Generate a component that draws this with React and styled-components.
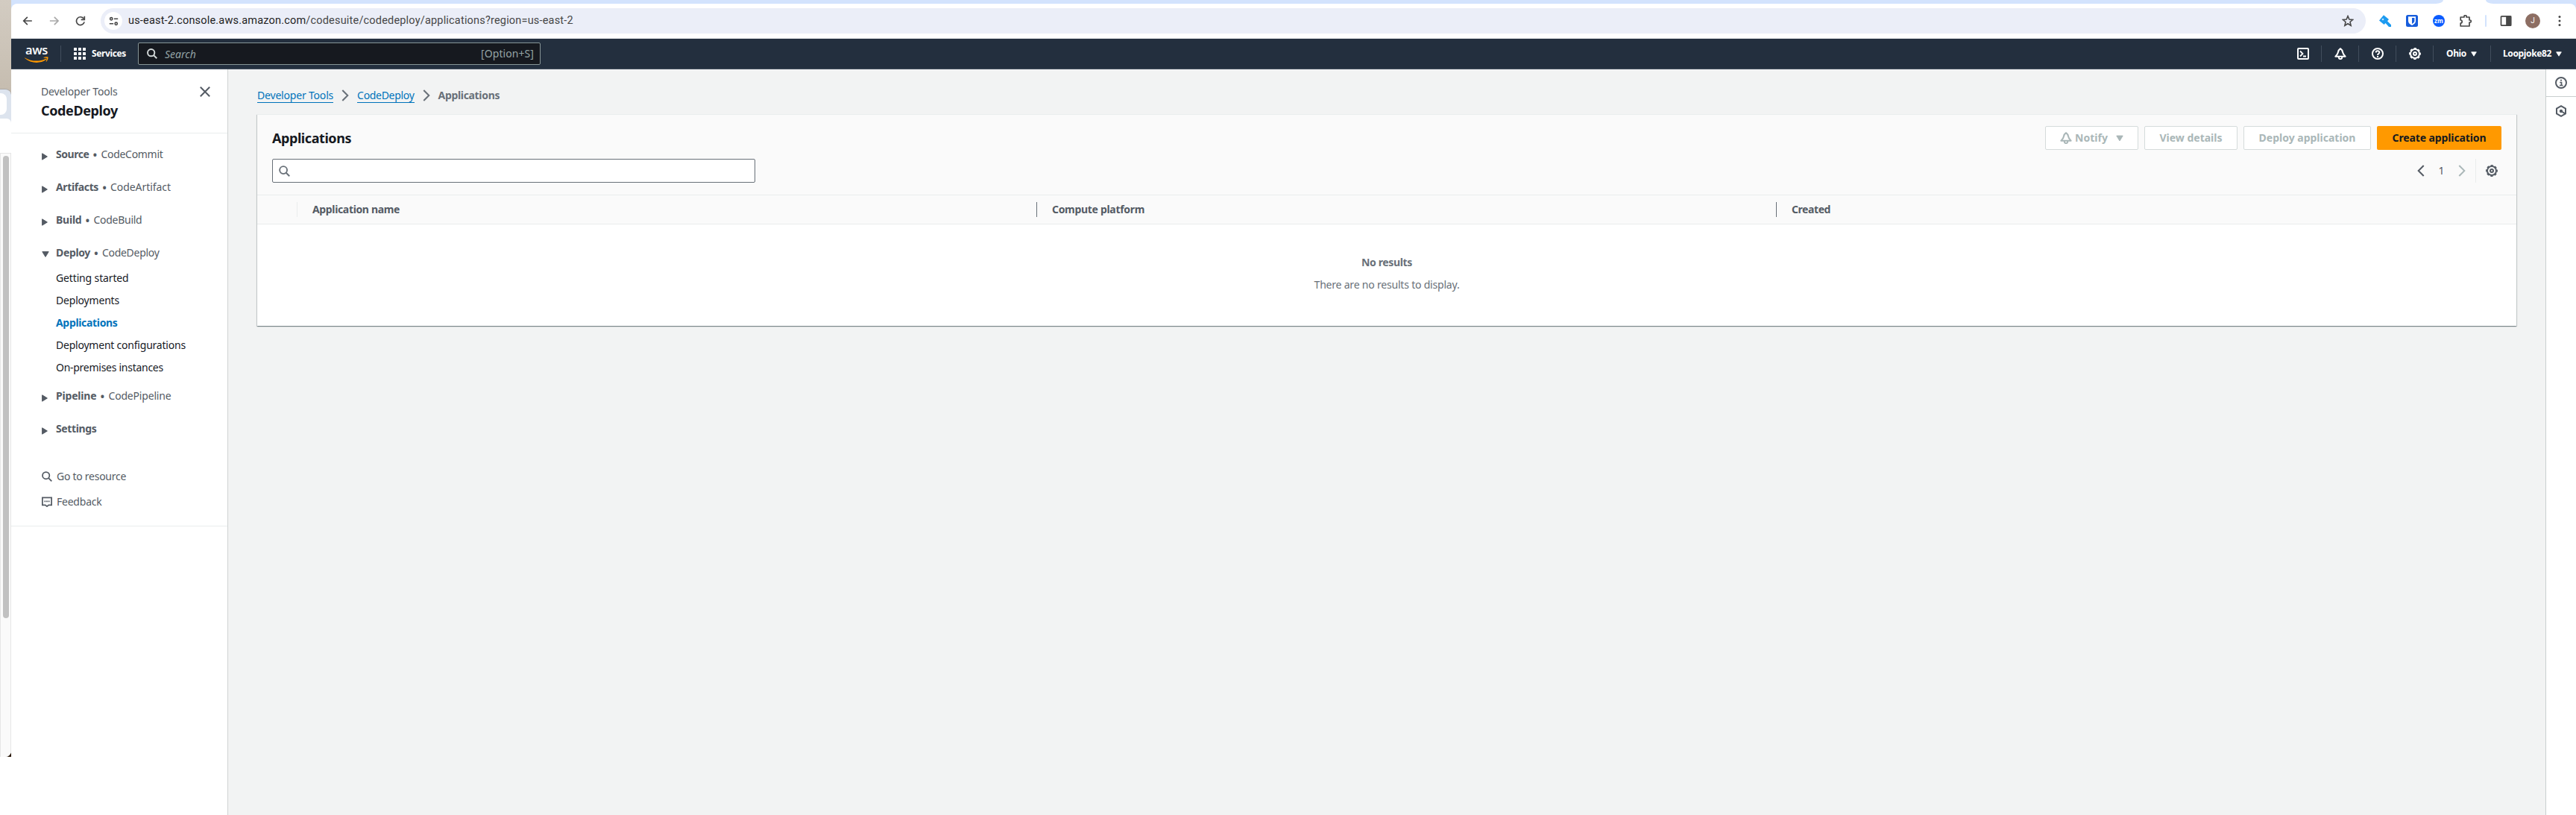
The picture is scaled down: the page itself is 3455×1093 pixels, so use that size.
import React from "react";
import styled, { createGlobalStyle, css } from "styled-components";

const Global = createGlobalStyle`
  * { box-sizing: border-box; }
  body { margin: 0; background: #fff; font-family: "Noto Sans", "Open Sans", sans-serif; font-size: 14px; line-height: 20px; color: #16191f; overflow: hidden; }
`;

const T = styled.span`
  white-space: nowrap;
  display: inline-block;
  letter-spacing: ${(p) => p.$ls || 0}px;
`;

/* ---------- page frame ---------- */
const Screen = styled.div`display: flex; width: 3455px; height: 1093px; overflow: hidden;`;
const Browser = styled.div`flex: 1; display: flex; flex-direction: column; min-width: 0; background: #d3e3fd;`;

/* ---------- window behind, on the left ---------- */
const Behind = styled.div`width: 15px; display: flex; flex-direction: column; overflow: hidden; background: #fff;`;
const Wallpaper = styled.div`height: 1015px; display: flex; flex-direction: column; padding-top: 119px; background: linear-gradient(#d3ccc2 0, #c6bdb0 119px, #2b1a0a 300px);`;
const BackWindow = styled.div`flex: 1; display: flex; flex-direction: column; background: #dde4ee; border-radius: 0 8px 8px 0; overflow: hidden; border-top: 1px solid #aaa8a5;`;
const BackTab = styled.div`width: 9px; height: 29px; margin-top: 5px; background: #fff; border-radius: 0 8px 8px 0;`;
const BackBar = styled.div`height: 46px; margin-top: 5px; background: #fff; border-radius: 0 6px 0 0;`;
const Track = styled.div`flex: 1; background: #fafafa; border: solid #e6e6e6; border-width: 1px 1px 0 1px; padding: 3px 2px 0 3px;`;
const Thumb = styled.div`width: 8px; height: 620px; border-radius: 4px; background: #c1c1c1;`;

/* ---------- browser toolbar ---------- */
const TabStrip = styled.div`height: 5px; display: flex; justify-content: space-between; background: #fff;`;
const TabsBefore = styled.div`width: 3262px; height: 5px; background: #d3e3fd; border-radius: 0 0 10px 0 / 0 0 5px 0;`;
const TabsAfter = styled.div`width: 121px; height: 5px; background: #d3e3fd; border-radius: 0 0 0 10px / 0 0 0 5px;`;
const ToolBar = styled.div`height: 47px; display: flex; align-items: center; background: #fff; border-radius: 8px 8px 0 0; border-bottom: 1px solid #dfe1e5; color: #474747;`;
const Tools = styled.div`display: flex; align-items: center; gap: 22px; padding: 0 20px 0 15px; width: 120px;`;
const Address = styled.div`flex: 1; height: 34px; border-radius: 17px; background: #ebeef8; display: flex; align-items: center; padding: 0 16px 0 5px;`;
const SiteInfo = styled.div`width: 24px; height: 24px; border-radius: 50%; background: #fff; display: flex; align-items: center; justify-content: center; margin-right: 8px;`;
const Url = styled.div`flex: 1; font: 14.5px/20px Roboto, sans-serif; color: #474747; white-space: nowrap;`;
const Host = styled.b`font-weight: 400; color: #1f1f1f;`;
const Extensions = styled.div`width: 282px; display: flex; align-items: center; padding-left: 18px; gap: 20px;`;
const Zoom = styled.div`width: 16px; height: 16px; border-radius: 50%; background: #0b5cff; color: #fff; font: 700 8px/15px "Open Sans", sans-serif; text-align: center;`;
const ThinRule = styled.div`width: 2px; height: 16px; margin: 0 -2px 0 -2px; border-radius: 1px; background: #d3e3fd;`;
const Avatar = styled.div`width: 20px; height: 20px; margin: 0 -2px; border-radius: 50%; background: #8d6e63; color: #fff; font: 10px/20px Roboto, sans-serif; text-align: center;`;

/* ---------- console navigation ---------- */
const Nav = styled.div`height: 41px; display: flex; align-items: center; background: #232f3e; border-bottom: 1px solid #414d5c; color: #fff; font-size: 12px; font-weight: 700;`;
const Logo = styled.div`width: 66px; padding-left: 18px; display: flex; flex-direction: column; align-items: flex-start; line-height: 0;`;
const LogoText = styled.div`font: 600 16.5px/14px "Open Sans", sans-serif; height: 16px; padding-left: 1px;`;
const Rule = styled.div`width: 1px; height: 22px; background: #414d5c;`;
const Services = styled.div`width: 103px; padding-left: 17px; display: flex; align-items: center; gap: 8px;`;
const NavSearch = styled.div`width: 540px; height: 30px; display: flex; align-items: center; background: #16191f; border: 1px solid #879596; border-radius: 2px; padding: 0 8px 0 11px; color: #95a5a6; font-size: 14px; font-weight: 400;`;
const Placeholder = styled.div`flex: 1; padding: 1px 0 0 10px; font-style: italic;`;
const Spacer = styled.div`flex: 1;`;
const NavCell = styled.div`width: ${(p) => p.$w || 49}px; display: flex; align-items: center; gap: 6px; ${(p) => p.$pad ? css`padding-left: ${p.$pad}px;` : css`justify-content: center;`}`;

/* ---------- console body ---------- */
const Body = styled.div`flex: 1; display: flex; min-height: 0; background: #f2f3f3;`;
const Side = styled.div`width: 291px; background: #fff; border-right: 1px solid #d0d4d4; color: #545b64;`;
const SideHead = styled.div`height: 86px; display: flex; justify-content: space-between; padding: 20px 22px 0 40px; border-bottom: 1px solid #eaeded;`;
const SideTitle = styled.div`margin-top: 4px; font-size: 18px; line-height: 22px; font-weight: 700; color: #16191f;`;
const CloseBox = styled.div`padding-top: 2px; height: 18px; line-height: 0;`;
const SideNav = styled.div`height: 527px; padding: 18px 0 0 40px; border-bottom: 1px solid #eaeded;`;
const Section = styled.div`display: flex; height: 20px; margin-bottom: ${(p) => p.$gap ?? 24}px;`;
const Twist = styled.div`width: 20px; padding: 8px 0 0 1px; line-height: 0;`;
const Bold = styled(T)`font-weight: 700;`;
const Dot = styled.span`width: 16px; text-align: center; flex: none; font-size: 18px;`;
const Links = styled.div`display: flex; flex-direction: column; gap: 10px; padding-left: 20px; margin-bottom: 18px;`;
const SideLink = styled.div`height: 20px; color: ${(p) => (p.$on ? "#0073bb" : "#16191f")}; font-weight: ${(p) => (p.$on ? 700 : 400)};`;
const Utility = styled.div`display: flex; align-items: center; height: 20px; gap: 6px; margin-bottom: 14px; padding-left: 1px;`;

const Main = styled.div`flex: 1; padding: 25px 39px 0 39px;`;
const Crumbs = styled.div`display: flex; align-items: center; height: 20px; color: #687078; font-weight: 700;`;
const Crumb = styled.a`color: #0073bb; font-weight: 400; height: 20px; box-shadow: inset 0 -1px #0073bb;`;
const CrumbArrow = styled.div`width: 32px; display: flex; justify-content: center;`;
const Card = styled.div`margin-top: 15px; background: #fff; border-top: 1px solid #eaeded; box-shadow: 0 1px 1px 0 rgba(0,28,36,.3), 1px 1px 1px 0 rgba(0,28,36,.15), -1px 1px 1px 0 rgba(0,28,36,.15);`;
const CardHead = styled.div`height: 108px; padding: 15px 20px 0; background: #fafafa; border-bottom: 1px solid #eaeded; display: flex; flex-direction: column; gap: 12px;`;
const Line = styled.div`height: 32px; display: flex; align-items: center; justify-content: space-between;`;
const Title = styled.div`font-size: 18px; line-height: 22px; font-weight: 700;`;
const Buttons = styled.div`display: flex; gap: 8px;`;
const Button = styled.div`width: ${(p) => p.$w}px; height: 32px; display: flex; align-items: center; justify-content: center; border-radius: 2px; font-weight: 700;
  ${(p) => p.$primary ? css`background: #ff9900; color: #16191f;` : css`background: #fff; color: #aab7b8; border: 1px solid #d5dbdb;`}`;
const BellGap = styled.div`margin-right: 4px; line-height: 0;`;
const CaretGap = styled.div`margin-left: 11px; line-height: 0;`;
const Filter = styled.div`width: 648px; height: 32px; padding-left: 8px; display: flex; align-items: center; background: #fff; border: 1px solid #687078; border-radius: 2px;`;
const Pager = styled.div`display: flex; align-items: center; color: #545b64; height: 32px; padding-right: 5px;`;
const PageNo = styled.div`width: 45px; text-align: center;`;
const PagerRule = styled.div`width: 1px; height: 32px; margin: 0 13px; background: #eaeded;`;
const HeadRow = styled.div`height: 39px; display: grid; grid-template-columns: 54px 1fr 1fr 1fr; align-items: center; background: #fafafa; border-bottom: 1px solid #eaeded; color: #545b64; font-weight: 700;`;
const HeadCell = styled.div`height: 20px; padding-left: 20px; display: flex; align-items: center; border-right: ${(p) => (p.$rule ? `1px solid ${p.$rule}` : "0")};`;
const Empty = styled.div`height: 136px; padding-top: 41px; display: flex; flex-direction: column; align-items: center; gap: 10px; color: #687078;`;

const Rail = styled.div`width: 41px; background: #fff; border-left: 1px solid #c9cfcf; color: #545b64;`;
const RailCell = styled.div`height: 37px; display: flex; align-items: center; justify-content: center; border-bottom: ${(p) => (p.$rule ? "1px solid #c9cfcf" : "0")};`;

/* ---------- icons ---------- */
const Svg = ({ s = 16, c = "currentColor", w = 2, children }) => (
  <svg width={s} height={s} viewBox="0 0 16 16" fill="none" stroke={c} strokeWidth={w}>{children}</svg>
);
const Search = (p) => <Svg {...p}><circle cx="6.5" cy="6.5" r="5.3" /><path d="M10.4 10.4 15.2 15.2" /></Svg>;
const Gear = (p) => (
  <Svg {...p}>
    <circle cx="8" cy="8" r="6" />
    <circle cx="8" cy="8" r="7.2" strokeWidth="1.5" strokeDasharray="3.2 2.455" strokeDashoffset="1.6" />
    <circle cx="8" cy="8" r="2" />
  </Svg>
);
const Bell = (p) => (
  <Svg {...p}>
    <path strokeLinejoin="round" d="M8 1.2C6.2 2.4 5.3 4 4.900 6 4.500 8.300 3.400 9.900 1.400 11.800H14.600C12.600 9.900 11.500 8.300 11.100 6 10.700 4 9.800 2.400 8 1.200Z" />
    <path d="M5.8 12v.9a2.2 2.2 0 0 0 4.400 0V12" />
  </Svg>
);
const Down = ({ c = "currentColor", w = 10, h = 8 }) => (
  <svg width={w} height={h} viewBox="0 0 10 8"><path d="M.8.6H9.2L5 7.4Z" fill={c} stroke={c} strokeLinejoin="round" /></svg>
);
const Right = () => (
  <svg width="8" height="10" viewBox="0 0 8 10"><path d="M.6.8V9.2L7.4 5Z" fill="#545b64" stroke="#545b64" strokeLinejoin="round" /></svg>
);
const Chevron = ({ c, left }) => (
  <svg width="10" height="16" viewBox="0 0 10 16" fill="none" stroke={c} strokeWidth="2"><path d={left ? "M8.7 1 1.7 8l7 7" : "M1.3 1l7 7-7 7"} /></svg>
);

const sections = [
  ["Source", "CodeCommit", -0.44, -0.3],
  ["Artifacts", "CodeArtifact", -0.37, -0.06],
  ["Build", "CodeBuild", -0.23, -0.27],
  ["Deploy", "CodeDeploy", -0.35, -0.3],
  ["Pipeline", "CodePipeline", -0.18, -0.18],
  ["Settings", null, -0.36],
];
const links = [
  ["Getting started", -0.14],
  ["Deployments", -0.19],
  ["Applications", -0.33],
  ["Deployment configurations", -0.22],
  ["On-premises instances", -0.27],
];

const SectionRow = ({ item, open, gap }) => (
  <Section $gap={gap}>
    <Twist>{open ? <Down c="#545b64" /> : <Right />}</Twist>
    <Bold $ls={item[2]}>{item[0]}</Bold>
    {item[1] && <Dot>•</Dot>}
    {item[1] && <T $ls={item[3]}>{item[1]}</T>}
  </Section>
);

export default function App() {
  return (
    <Screen>
      <Global />
      <Behind>
        <Wallpaper>
          <BackWindow><BackTab /><BackBar /><Track><Thumb /></Track></BackWindow>
        </Wallpaper>
      </Behind>
      <Browser>
        <TabStrip><TabsBefore /><TabsAfter /></TabStrip>
        <ToolBar>
          <Tools>
            <Svg s={14} w={2}><path d="M15 8H2.5M8 2 2 8 8 14" /></Svg>
            <Svg s={14} w={2} c="#a9a9a9"><path d="M1 8H13.5M8 2 14 8 8 14" /></Svg>
            <Svg s={14} w={2}><path d="M13.4 4.8A6.300 6.300 0 1 0 14.200 9.600" /><path d="M14.400 .8v5.400H9" /></Svg>
          </Tools>
          <Address>
            <SiteInfo><Svg s={13} w={1.9}><circle cx="4" cy="4" r="2" /><path d="M8.5 4H15M1 12H7.5" /><circle cx="12" cy="12" r="2" /></Svg></SiteInfo>
            <Url>
              <T $ls={0.19}><Host>us-east-2.console.aws.amazon.com</Host>/codesuite/codedeploy/applications?region=us-east-2</T>
            </Url>
            <Svg w={1.6}><path d="M8 1.6 9.9 6l4.7.4-3.6 3.1 1.1 4.7L8 11.7l-4.1 2.5L5 9.5 1.4 6.4 6.1 6Z" /></Svg>
          </Address>
          <Extensions>
            <Svg><path d="M6 .3 13 6l-2 2.3 5 5V16h-3l-4.5-5-2 2L0 7.5Z" fill="#1d9bf0" stroke="none" /><circle cx="5" cy="6" r="1.3" fill="#bfe3fb" stroke="none" /></Svg>
            <Svg><rect width="16" height="16" rx="2.5" fill="#175ddc" stroke="none" /><path d="M3 2.3H13V8c0 3-2.6 4.8-5 6C5.6 12.8 3 11 3 8Z" fill="#fff" stroke="none" /><path d="M8 4h3.4v4c0 1.8-1.7 3-3.4 4Z" fill="#175ddc" stroke="none" /></Svg>
            <Zoom>zm</Zoom>
            <Svg w={1.7}><path strokeLinejoin="round" d="M1.200 3H6V2a1.500 1.500 0 0 1 3 0v1H13V7h.8a1.500 1.500 0 0 1 0 3H13v5H1.200V11a2 2 0 0 0 0-4Z" /></Svg>
            <ThinRule />
            <Svg w={1.7}><rect x="1.5" y="1.8" width="13" height="12.4" rx="1" /><path d="M9 2h5.5v12H9Z" fill="#474747" /></Svg>
            <Avatar>J</Avatar>
            <Svg><g fill="#474747" stroke="none"><circle cx="8" cy="2.6" r="1.5" /><circle cx="8" cy="8" r="1.5" /><circle cx="8" cy="13.4" r="1.5" /></g></Svg>
          </Extensions>
        </ToolBar>
        <Nav>
          <Logo>
            <LogoText><T $ls={-0.35}>aws</T></LogoText>
            <svg width="32" height="9" viewBox="0 0 32 9" fill="#ff9900"><path d="M.3 1.4C9 6.6 20 6.7 28 2.9c1-.4 1.7.5.8 1.2C21 9.8 8 9.2.2 2c-.3-.4-.2-.8.1-.6Z" /><path d="M25.5 1.3C27.5 0 31 .1 31.4.6c.5.7-.2 4.5-2.3 6.1-.4.3-.7.1-.5-.3.5-1.2 1.5-3.8 1-4.4-.5-.6-2.6-.3-3.8-.2-.4 0-.5-.3-.3-.5Z" /></svg>
          </Logo>
          <Rule />
          <Services>
            <svg width="16" height="16" fill="#fff">{[0, 6, 12].map((y) => [0, 6, 12].map((x) => <rect key={x + "-" + y} x={x} y={y} width="4" height="4" rx=".5" />))}</svg>
            <T $ls={-0.37}>Services</T>
          </Services>
          <NavSearch>
            <Search s={14} c="#d5dbdb" w={2.2} />
            <Placeholder><T>Search</T></Placeholder>
            <T $ls={0.07}>[Option+S]</T>
          </NavSearch>
          <Spacer />
          <NavCell><Svg><rect x="1" y="1" width="14" height="14" rx="1" /><path d="M4 4.5 7.5 8 4 11.5M8 11.5h4" strokeWidth="1.8" /></Svg></NavCell>
          <Rule />
          <NavCell><Bell /></NavCell>
          <Rule />
          <NavCell><Svg><circle cx="8" cy="8" r="7" /><path d="M5.7 6.5C5.7 3.6 10.3 3.6 10.3 6.3 10.3 8 8 8 8 10" /><path d="M8 11v2" /></Svg></NavCell>
          <Rule />
          <NavCell><Gear /></NavCell>
          <Rule />
          <NavCell $w={76} $pad={17}><T $ls={-0.35}>Ohio</T><Down w={8} h={7} /></NavCell>
          <Rule />
          <NavCell $w={114} $pad={16}><T $ls={-0.37}>Loopjoke82</T><Down w={8} h={7} /></NavCell>
        </Nav>
        <Body>
          <Side>
            <SideHead>
              <div>
                <T $ls={-0.16}>Developer Tools</T>
                <SideTitle><T $ls={-0.38}>CodeDeploy</T></SideTitle>
              </div>
              <CloseBox><Svg><path d="M1.8 1.8l12.4 12.4M14.2 1.8l-12.4 12.4" /></Svg></CloseBox>
            </SideHead>
            <SideNav>
              {sections.slice(0, 3).map((s) => <SectionRow key={s[0]} item={s} />)}
              <SectionRow item={sections[3]} open gap={14} />
              <Links>{links.map((l) => <SideLink key={l[0]} $on={l[0] === "Applications"}><T $ls={l[1]}>{l[0]}</T></SideLink>)}</Links>
              <SectionRow item={sections[4]} />
              <SectionRow item={sections[5]} gap={44} />
              <Utility><Search s={14} /><T $ls={-0.27}>Go to resource</T></Utility>
              <Utility><Svg s={14} w={2}><path d="M1 1.5H15V13H10.5L8 15 5.5 13H1Z" /><path d="M4 7.3h8" strokeDasharray="2 1" /></Svg><T $ls={-0.23}>Feedback</T></Utility>
            </SideNav>
          </Side>
          <Main>
            <Crumbs>
              <Crumb><T $ls={-0.19}>Developer Tools</T></Crumb>
              <CrumbArrow><Chevron c="#687078" /></CrumbArrow>
              <Crumb><T $ls={-0.3}>CodeDeploy</T></Crumb>
              <CrumbArrow><Chevron c="#687078" /></CrumbArrow>
              <T $ls={-0.33}>Applications</T>
            </Crumbs>
            <Card>
              <CardHead>
                <Line>
                  <Title><T $ls={-0.43}>Applications</T></Title>
                  <Buttons>
                    <Button $w={125}><BellGap><Bell /></BellGap><T>Notify</T><CaretGap><Down w={10} h={9} /></CaretGap></Button>
                    <Button $w={125}><T>View details</T></Button>
                    <Button $w={171}><T>Deploy application</T></Button>
                    <Button $w={167} $primary><T $ls={-0.11}>Create application</T></Button>
                  </Buttons>
                </Line>
                <Line>
                  <Filter><Search s={15} c="#687078" /></Filter>
                  <Pager>
                    <Chevron c="#545b64" left />
                    <PageNo>1</PageNo>
                    <Chevron c="#aab7b8" />
                    <PagerRule />
                    <Gear />
                  </Pager>
                </Line>
              </CardHead>
              <HeadRow>
                <HeadCell $rule="#eaeded" />
                <HeadCell $rule="#687078"><T $ls={-0.35}>Application name</T></HeadCell>
                <HeadCell $rule="#687078"><T $ls={-0.31}>Compute platform</T></HeadCell>
                <HeadCell><T $ls={-0.43}>Created</T></HeadCell>
              </HeadRow>
              <Empty>
                <Bold $ls={-0.35}>No results</Bold>
                <T $ls={-0.2}>There are no results to display.</T>
              </Empty>
            </Card>
          </Main>
          <Rail>
            <RailCell $rule><Svg><circle cx="8" cy="8" r="7" /><path d="M6.2 7.5H8.5V12M6 11.5h4.5M7 4.6h2" strokeWidth="1.7" /></Svg></RailCell>
            <RailCell><Svg><path d="M8 1.2 14 4.5v7L8 14.8 2 11.5v-7Z" /><path d="M8 8l5.5 3.5" /><circle cx="8" cy="8" r="1.2" fill="#545b64" /></Svg></RailCell>
          </Rail>
        </Body>
      </Browser>
    </Screen>
  );
}
